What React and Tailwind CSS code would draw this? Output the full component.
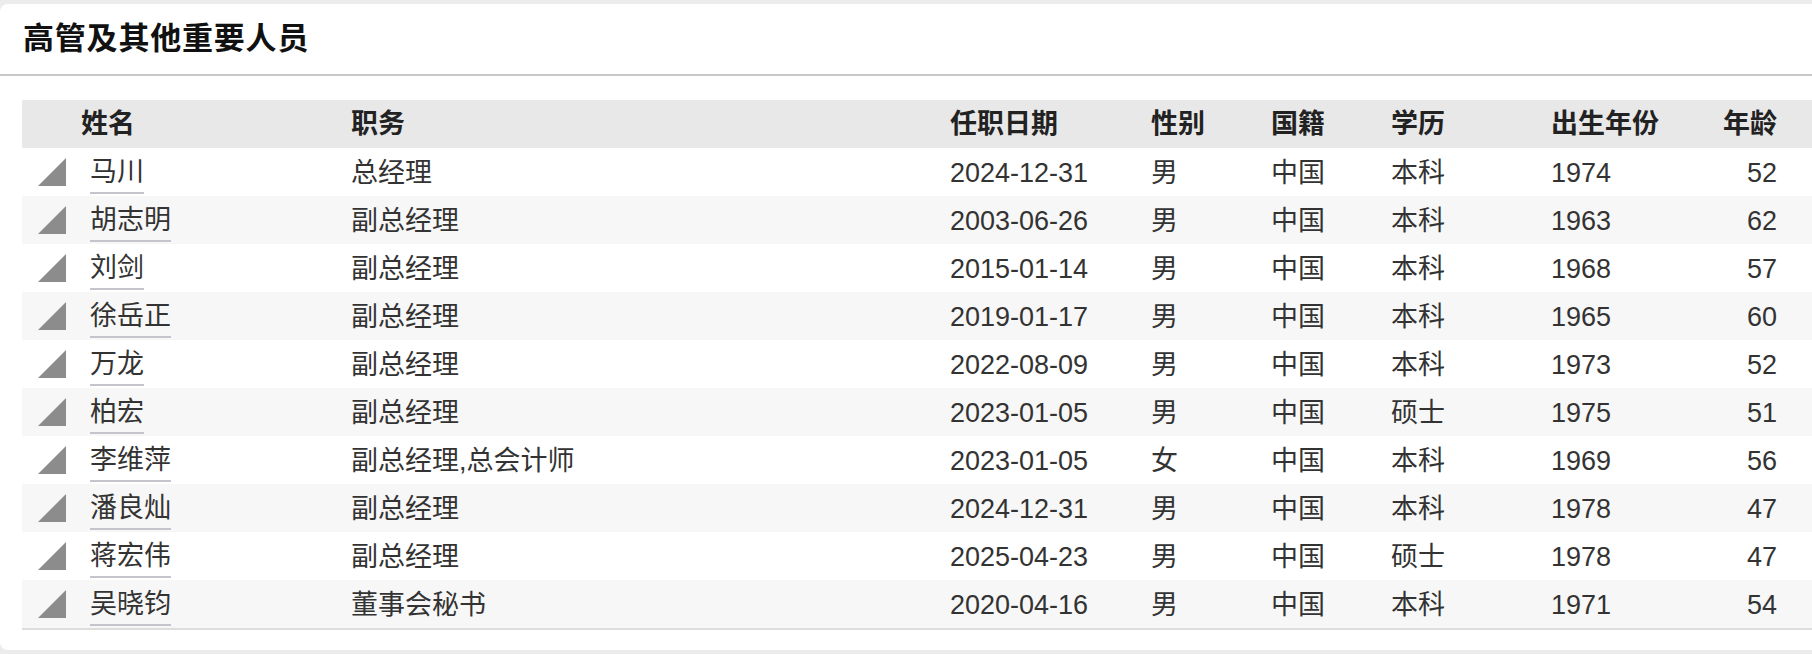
const ROWS = [
  { name: "马川", title: "总经理", date: "2024-12-31", sex: "男", nation: "中国", edu: "本科", born: "1974", age: "52" },
  { name: "胡志明", title: "副总经理", date: "2003-06-26", sex: "男", nation: "中国", edu: "本科", born: "1963", age: "62" },
  { name: "刘剑", title: "副总经理", date: "2015-01-14", sex: "男", nation: "中国", edu: "本科", born: "1968", age: "57" },
  { name: "徐岳正", title: "副总经理", date: "2019-01-17", sex: "男", nation: "中国", edu: "本科", born: "1965", age: "60" },
  { name: "万龙", title: "副总经理", date: "2022-08-09", sex: "男", nation: "中国", edu: "本科", born: "1973", age: "52" },
  { name: "柏宏", title: "副总经理", date: "2023-01-05", sex: "男", nation: "中国", edu: "硕士", born: "1975", age: "51" },
  { name: "李维萍", title: "副总经理,总会计师", date: "2023-01-05", sex: "女", nation: "中国", edu: "本科", born: "1969", age: "56" },
  { name: "潘良灿", title: "副总经理", date: "2024-12-31", sex: "男", nation: "中国", edu: "本科", born: "1978", age: "47" },
  { name: "蒋宏伟", title: "副总经理", date: "2025-04-23", sex: "男", nation: "中国", edu: "硕士", born: "1978", age: "47" },
  { name: "吴晓钧", title: "董事会秘书", date: "2020-04-16", sex: "男", nation: "中国", edu: "本科", born: "1971", age: "54" },
];

// column widths measured off the screenshot
const GRID = "grid grid-cols-[329px_599px_201px_120px_120px_160px_1fr_100px] items-center";

const Corner = () => (
  <svg width="28" height="28" viewBox="0 0 28 28" className="shrink-0">
    <polygon points="28,0 28,28 0,28" fill="#8c8c8c" />
  </svg>
);

export default function App() {
  return (
    <div
      className="h-[654px] bg-[#ececec] pt-[4px] overflow-hidden"
      style={{ fontFamily: "'Liberation Sans', 'Noto Sans CJK SC', sans-serif" }}
    >
      <div className="h-[646px] bg-white rounded-l-[8px]">
        {/* HEADER */}
        <div className="h-[72px] flex items-center px-[23px] border-b-2 border-[#c8c8c8]">
          <h2 className="text-[31px] font-bold text-[#111] tracking-[0.8px]">高管及其他重要人员</h2>
        </div>

        {/* TABLE */}
        <div className="ml-[22px] mt-[24px] border-b-2 border-[#dddddd] text-[27px] text-[#333]">
          <div className={`${GRID} h-[48px] bg-[#e8e8e8] font-bold text-[#222] pr-[35px]`}>
            <div className="pl-[59px]">姓名</div>
            <div>职务</div>
            <div>任职日期</div>
            <div>性别</div>
            <div>国籍</div>
            <div>学历</div>
            <div>出生年份</div>
            <div className="text-right">年龄</div>
          </div>

          {ROWS.map((r, i) => (
            <div
              key={r.name}
              className={`${GRID} h-[48px] pr-[35px] pt-[2px] ${i % 2 === 1 ? "bg-[#f7f7f7]" : "bg-white"}`}
            >
              <div className="flex items-center pl-[16px] gap-[24px] -mt-[2px]">
                <Corner />
                <span className="leading-[30px] mt-[6px] pb-[5px] border-b-2 border-[#c4c4cc]">{r.name}</span>
              </div>
              <div>{r.title}</div>
              <div>{r.date}</div>
              <div>{r.sex}</div>
              <div>{r.nation}</div>
              <div>{r.edu}</div>
              <div>{r.born}</div>
              <div className="text-right">{r.age}</div>
            </div>
          ))}
        </div>
      </div>
    </div>
  );
}
